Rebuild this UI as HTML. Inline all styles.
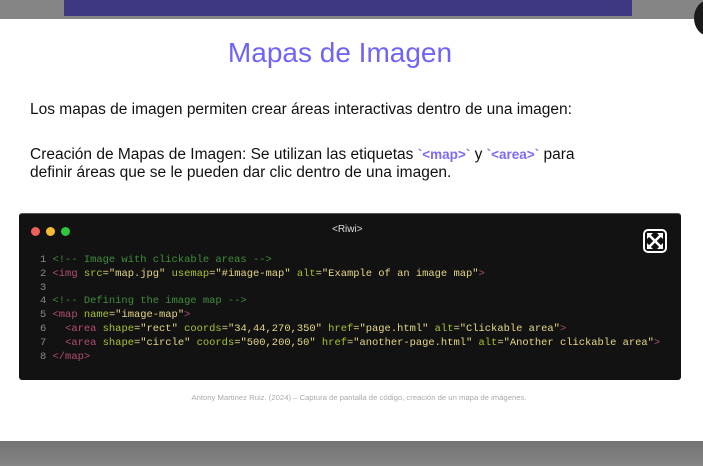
<!DOCTYPE html>
<html><head><meta charset="utf-8"><style>
*{margin:0;padding:0;box-sizing:border-box}
body{width:703px;height:466px;overflow:hidden;background:#828282;position:relative;font-family:"Liberation Sans",sans-serif}
.top{position:absolute;left:0;top:0;width:703px;height:19px;background:#858585}
.pur{position:absolute;left:64px;top:0;width:568px;height:16px;background:#3e3782}
.modal{position:absolute;left:0;top:19px;width:703px;height:422px;background:#fff}
.bottom{position:absolute;left:0;top:441px;width:703px;height:25px;background:linear-gradient(#727272,#858585)}
.circ{position:absolute;left:694px;top:0;width:30px;height:36px;border-radius:50%;background:#1a1a1a}
h1{position:absolute;left:0;width:680px;top:37px;text-align:center;font-weight:normal;font-size:28px;color:#7064f8}
p{position:absolute;left:30px;font-size:15.5px;color:#111;line-height:18px;white-space:nowrap}
.t{color:#7a6cf6;font-weight:bold;font-size:13.5px}
.code{position:absolute;left:19px;top:213px;width:662px;height:167px;background:#121212;border-radius:3px;border-top:1px solid #555}
.dot{position:absolute;top:13px;width:9px;height:9px;border-radius:50%}
.riwi{position:absolute;left:313px;top:10px;color:#ddd;font-size:10px}
pre{position:absolute;left:21px;top:40px;font-family:"Liberation Mono",monospace;font-size:10.45px;line-height:13.8px;color:#e6d785}
.n{color:#888}.c{color:#3f8d3a}.g{color:#b24f72}.a{color:#a6c230}
.cap{position:absolute;left:0;width:718px;top:393px;text-align:center;font-size:7.7px;color:#aaa}
</style></head><body>
<div class="top"></div><div class="pur"></div>
<div class="modal"></div>
<div class="circ"></div>
<div class="bottom"></div>
<h1>Mapas de Imagen</h1>
<p style="top:101px">Los mapas de imagen permiten crear áreas interactivas dentro de una imagen:</p>
<p style="top:146px">Creación de Mapas de Imagen: Se utilizan las etiquetas <span class="t">`&lt;map&gt;`</span> y <span class="t">`&lt;area&gt;`</span> para<br>definir áreas que se le pueden dar clic dentro de una imagen.</p>
<div class="code">
<div class="dot" style="left:12px;background:#f25f58"></div>
<div class="dot" style="left:27px;background:#f9bd2e"></div>
<div class="dot" style="left:42px;background:#2dc840"></div>
<div class="riwi">&lt;Riwi&gt;</div>
<svg style="position:absolute;left:624px;top:15px" width="24" height="24" viewBox="0 0 24 24"><rect x="1" y="1" width="22" height="22" rx="4" fill="none" stroke="#fff" stroke-width="2"/><path d="M5 5L19 19M19 5L5 19" stroke="#fff" stroke-width="2.5"/><path d="M4 4h6l-6 6zM20 4h-6l6 6zM4 20h6l-6-6zM20 20h-6l6-6z" fill="#fff"/></svg>
<pre><span class="n">1</span> <span class="c">&lt;!-- Image with clickable areas --&gt;</span>
<span class="n">2</span> <span class="g">&lt;img</span> <span class="a">src</span>="map.jpg" <span class="a">usemap</span>="#image-map" <span class="a">alt</span>="Example of an image map"<span class="g">&gt;</span>
<span class="n">3</span>
<span class="n">4</span> <span class="c">&lt;!-- Defining the image map --&gt;</span>
<span class="n">5</span> <span class="g">&lt;map</span> <span class="a">name</span>="image-map"<span class="g">&gt;</span>
<span class="n">6</span>   <span class="g">&lt;area</span> <span class="a">shape</span>="rect" <span class="a">coords</span>="34,44,270,350" <span class="a">href</span>="page.html" <span class="a">alt</span>="Clickable area"<span class="g">&gt;</span>
<span class="n">7</span>   <span class="g">&lt;area</span> <span class="a">shape</span>="circle" <span class="a">coords</span>="500,200,50" <span class="a">href</span>="another-page.html" <span class="a">alt</span>="Another clickable area"<span class="g">&gt;</span>
<span class="n">8</span> <span class="g">&lt;/map&gt;</span></pre>
</div>
<div class="cap">Antony Martinez Ruiz. (2024) – Captura de pantalla de código, creación de un mapa de imágenes.</div>
</body></html>
